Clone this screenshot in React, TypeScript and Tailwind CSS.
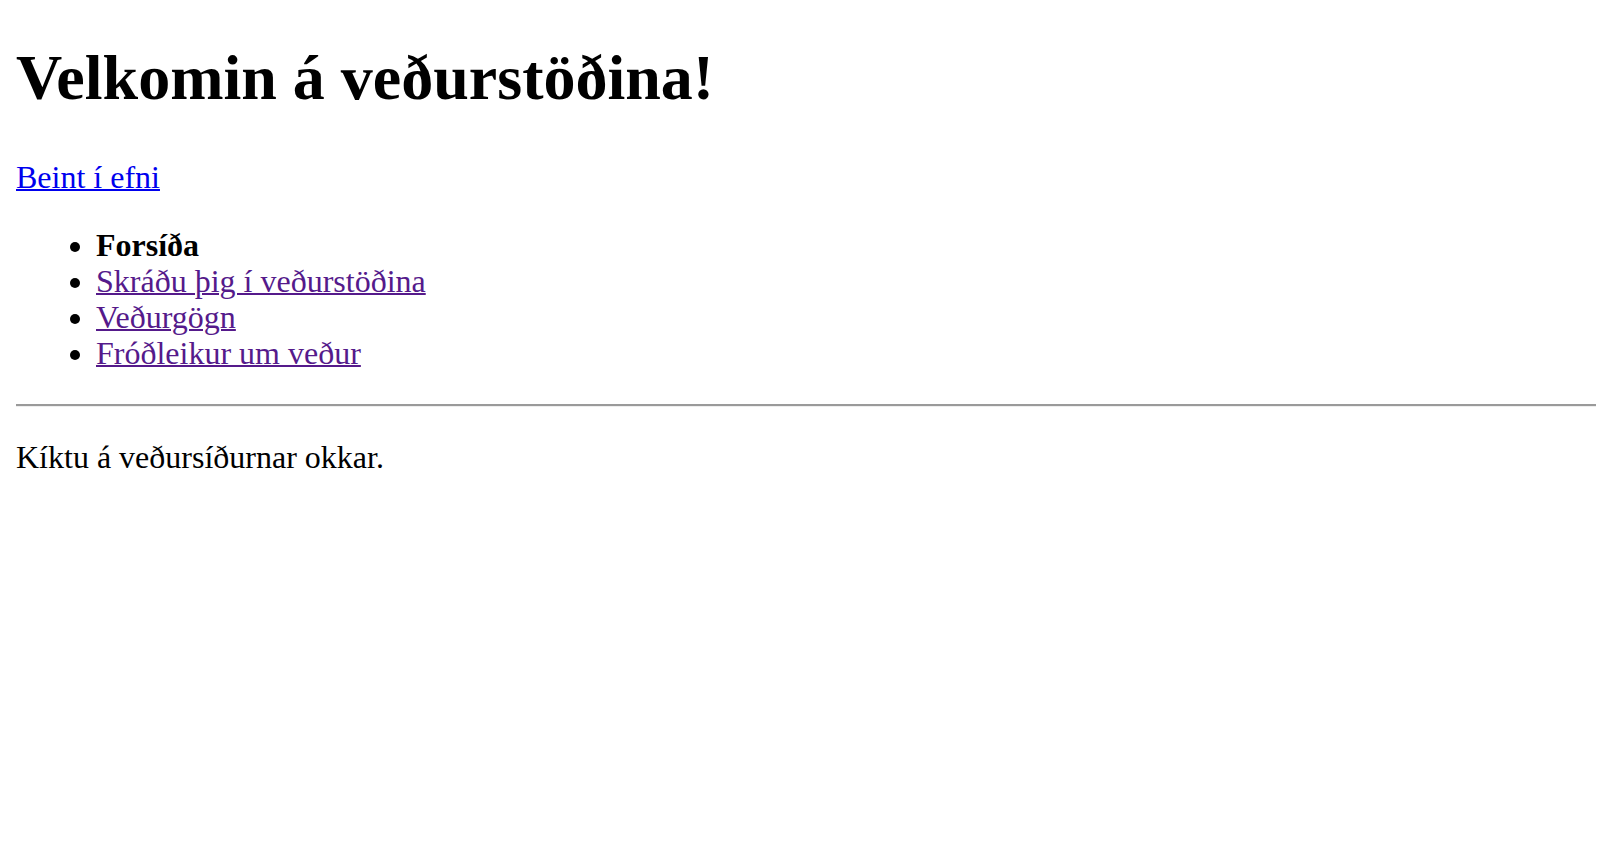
import React from "react";

export default function App() {
  return (
    <div
      className="min-h-[850px] bg-white px-[16px] pt-[41px] text-black"
      style={{ fontFamily: '"Liberation Serif", "Times New Roman", serif' }}
    >
      <h1 className="text-[64px] font-bold leading-[74px]">Velkomin á veðurstöðina!</h1>
      <div className="mt-[44px] text-[32px] leading-[36px]">
        <a href="#efni" className="text-[#0000ee] underline decoration-[2px]">
          Beint í efni
        </a>
      </div>
      <ul className="mt-[32px] list-disc pl-[80px] text-[32px] leading-[36px]">
        <li className="font-bold">Forsíða</li>
        <li>
          <a href="#skraning" className="text-[#551a8b] underline decoration-[2px]">
            Skráðu þig í veðurstöðina
          </a>
        </li>
        <li>
          <a href="#vedurgogn" className="text-[#551a8b] underline decoration-[2px]">
            Veðurgögn
          </a>
        </li>
        <li>
          <a href="#frodleikur" className="text-[#551a8b] underline decoration-[2px]">
            Fróðleikur um veður
          </a>
        </li>
      </ul>
      <hr className="mt-[33px] border-0 border-t-2 border-b border-t-[#9a9a9a] border-b-[#eeeeee]" />
      <p id="efni" className="mt-[32px] text-[32px] leading-[36px]">
        Kíktu á veðursíðurnar okkar.
      </p>
    </div>
  );
}
